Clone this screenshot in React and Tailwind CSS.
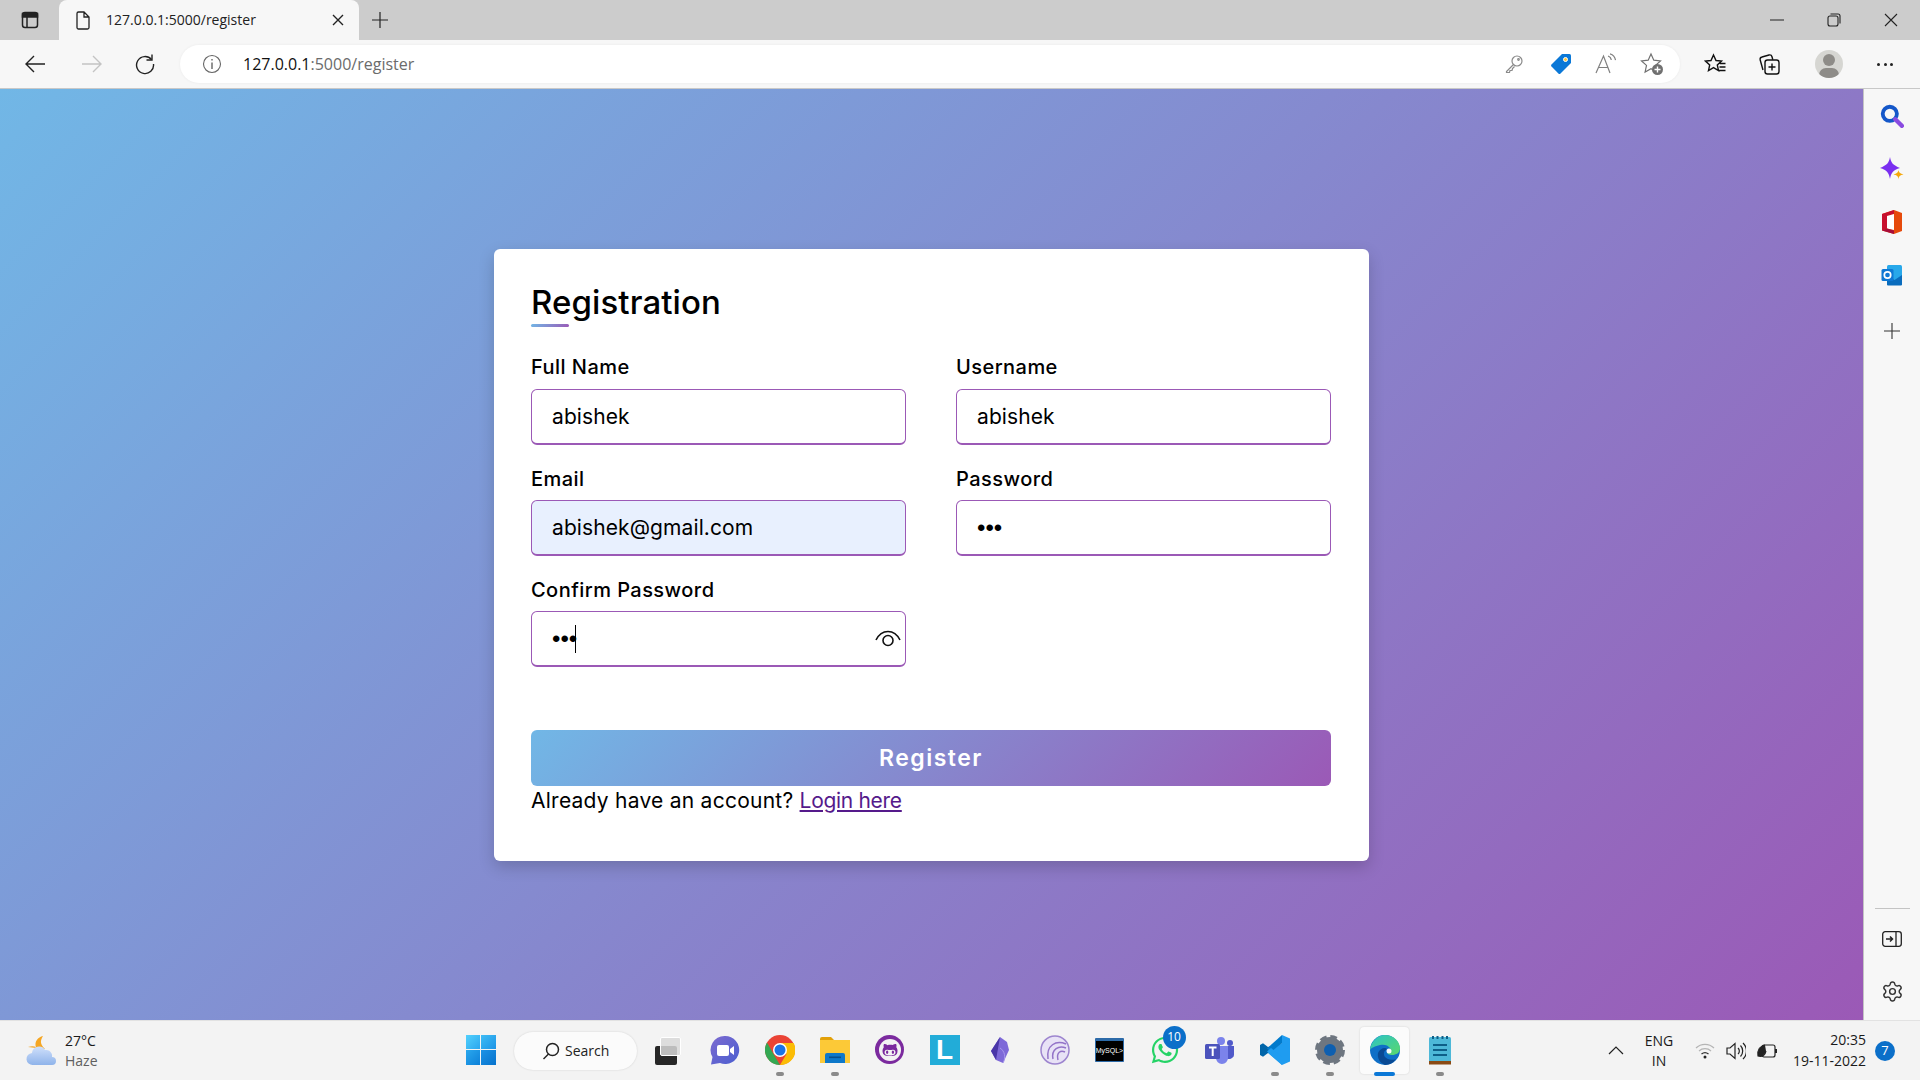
import { FaWhatsapp, FaGithubAlt } from 'react-icons/fa';
import { Settings } from 'lucide-react';

const uiFont = "[font-family:'Open_Sans',sans-serif]";

function Field({ label, value, type = 'text', autofill, firstRow, children }) {
  const isPassword = type === 'password';
  return (
    <div className="relative w-[375px]">
      <label className={`block h-[30px] text-[20px] leading-[30px] font-medium tracking-[0.45px] text-black ${firstRow ? 'mb-[7px]' : 'mb-[5px] -mt-px pb-px h-[31px]'}`}>
        {label}
      </label>
      <div className="relative">
        <input
          readOnly
          type={type}
          value={value}
          className={`block w-full h-[56px] pl-[20px] pr-[10px] rounded-[6px] border border-b-2 border-[#9b59b6] text-black outline-none ${isPassword ? "text-[24px] [font-family:'Liberation_Sans',sans-serif]" : 'text-[21px] tracking-[0.1px]'} ${autofill ? 'bg-[#e8f0fe]' : 'bg-white'}`}
        />
        {children}
      </div>
    </div>
  );
}

function EyeIcon() {
  return (
    <svg className="absolute right-[5px] top-[18px]" width="26" height="20" viewBox="0 0 26 20" fill="none" stroke="#111" strokeWidth="1.6">
      <path d="M1 11C4 5 8 2.5 13 2.5S22 5 25 11" />
      <circle cx="13" cy="11.5" r="5" />
    </svg>
  );
}

function TabBar() {
  return (
    <div className="h-10 bg-[#cccccc] flex items-end shrink-0">
      <div className="w-[59px] h-10 flex items-center justify-center">
        <svg width="20" height="20" viewBox="0 0 20 20" fill="none" stroke="#222" strokeWidth="1.5">
          <rect x="2.5" y="2.5" width="15" height="15" rx="2.5" />
          <path d="M2.5 3.5h15V7h-15z" fill="#222" />
          <path d="M7 7v10" />
        </svg>
      </div>
      <div className="w-[300px] h-10 bg-[#f7f7f7] rounded-t-[8px] flex items-center pl-[15px] pr-[15px]">
        <svg width="18" height="20" viewBox="0 0 18 20" fill="none" stroke="#222" strokeWidth="1.3" className="shrink-0">
          <path d="M3 3.5A1.5 1.5 0 0 1 4.5 2H10l5 5v10.5a1.5 1.5 0 0 1-1.5 1.5h-9A1.5 1.5 0 0 1 3 17.5zM10 2v5h5" />
        </svg>
        <span className={`ml-[14px] -mt-[1px] text-[14px] text-[#222] ${uiFont}`}>127.0.0.1:5000/register</span>
        <svg className="ml-auto" width="12" height="12" viewBox="0 0 12 12" stroke="#222" strokeWidth="1.4">
          <path d="M1 1l10 10M11 1L1 11" />
        </svg>
      </div>
      <div className="w-[42px] h-10 flex items-center justify-center">
        <svg width="18" height="18" viewBox="0 0 18 18" stroke="#222" strokeWidth="1.2">
          <path d="M9 1v16M1 9h16" />
        </svg>
      </div>
      <div className="flex-1" />
      <div className="w-[56px] h-10 flex items-center justify-center mr-[1px]">
        <svg width="14" height="2" viewBox="0 0 14 2" stroke="#222"><path d="M0 1h14" /></svg>
      </div>
      <div className="w-[56px] h-10 flex items-center justify-center">
        <svg width="14" height="14" viewBox="0 0 14 14" fill="none" stroke="#222" strokeWidth="1.1">
          <rect x="1" y="3" width="10" height="10" rx="2" />
          <path d="M3.5 1H11a2 2 0 0 1 2 2v7.5" />
        </svg>
      </div>
      <div className="w-[58px] h-10 flex items-center justify-center">
        <svg width="14" height="14" viewBox="0 0 14 14" stroke="#222" strokeWidth="1.1"><path d="M1 1l12 12M13 1L1 13" /></svg>
      </div>
    </div>
  );
}

function ToolBtn({ w, children }) {
  return <div className={`${w} h-12 flex items-center justify-center shrink-0`}>{children}</div>;
}

function ToolBar() {
  return (
    <div className="h-[49px] bg-[#f7f7f7] border-b border-[#c8c8c8] flex items-center shrink-0">
      <ToolBtn w="w-[70px]">
        <svg width="22" height="20" viewBox="0 0 22 20" fill="none" stroke="#222" strokeWidth="1.4">
          <path d="M21 10H2M10 2l-8 8 8 8" />
        </svg>
      </ToolBtn>
      <ToolBtn w="w-[44px]">
        <svg width="22" height="20" viewBox="0 0 22 20" fill="none" stroke="#c4c4c4" strokeWidth="1.4">
          <path d="M1 10h19M12 2l8 8-8 8" />
        </svg>
      </ToolBtn>
      <ToolBtn w="w-[62px]">
        <svg width="22" height="22" viewBox="0 0 22 22" fill="none" stroke="#222" strokeWidth="1.4">
          <path d="M17.5 6.5A8.5 8.5 0 1 0 19.5 11" />
          <path d="M18 1.5v5.5h-5.5" />
        </svg>
      </ToolBtn>
      <div className="w-[1500px] ml-[4px] h-[38px] bg-white rounded-[19px] flex items-center pl-[22px] shadow-[0_0_3px_rgba(0,0,0,0.06)] shrink-0">
        <svg width="20" height="20" viewBox="0 0 20 20" fill="none" stroke="#666" strokeWidth="1.1" className="shrink-0">
          <circle cx="10" cy="10" r="8.5" />
          <path d="M10 8.5V15M10 5v1.6" strokeWidth="1.4" />
        </svg>
        <span className={`ml-[21px] text-[16px] text-[#6b6b6b] ${uiFont}`}>
          <span className="text-[#111]">127.0.0.1</span>:5000/register
        </span>
        <div className="ml-auto flex items-center h-full pr-[16px]">
          <svg className="mr-[2px]" width="20" height="20" viewBox="0 0 20 20" fill="none" stroke="#8a8a8a" strokeWidth="1.2">
            <circle cx="13" cy="7" r="5" />
            <path d="M9.5 10.5L2.5 17.5v1h3l.5-2h2l.5-2 2-2" />
            <circle cx="14.5" cy="5.5" r="0.8" />
          </svg>
          <svg className="ml-[24px]" width="22" height="22" viewBox="0 0 22 22">
            <path d="M12 1h7.5A1.5 1.5 0 0 1 21 2.5V10L10.5 20.5a1.5 1.5 0 0 1-2.1 0L1.500 13.600a1.500 1.500 0 0 1 0-2.100z" fill="#0b78d7" />
            <circle cx="15.5" cy="6.5" r="2" fill="#ffc83d" stroke="#fff" />
          </svg>
          <svg className="ml-[23px]" width="24" height="22" viewBox="0 0 24 22" fill="none" stroke="#808080" strokeWidth="1.2">
            <path d="M1 20L8.5 3 15 20M3.5 14.5h10" />
            <path d="M13 3c2 .6 3 2 3.3 4M15 .8c3 .8 5 3 5.5 6.4" />
          </svg>
          <svg className="ml-[21px]" width="24" height="24" viewBox="0 0 24 24" fill="none" stroke="#707070" strokeWidth="1.2">
            <path d="M11 2l2.8 6.2 6.7.7-5 4.500 1.400 6.600L11 16.800 5.100 20l1.400-6.600-5-4.500 6.700-.7z" />
            <circle cx="17.5" cy="17.5" r="5.5" fill="#707070" stroke="none" />
            <path d="M17.5 14.5v6M14.5 17.5h6" stroke="#fff" strokeWidth="1.4" />
          </svg>
        </div>
      </div>
      <div className="ml-[24px] w-[22px] flex justify-center shrink-0 -mr-px">
        <svg width="22" height="22" viewBox="0 0 22 22" fill="none" stroke="#111" strokeWidth="1.4">
          <path d="M9.5 2l2.500 5.500 5.500.6-4.200 3.800 1.200 5.600-5-2.900-5 2.900 1.200-5.600L1.500 8.100 7 7.500zM16 10.500h5.500M15.500 14h6M15 17.500h6.500" />
        </svg>
      </div>
      <div className="ml-[32px] w-[24px] flex justify-center shrink-0">
        <svg width="24" height="24" viewBox="0 0 24 24" fill="none" stroke="#111" strokeWidth="1.4">
          <rect x="8" y="8" width="14" height="14" rx="2.5" />
          <path d="M6 18l-2.800-10A2.500 2.500 0 0 1 5 5l7-2a2.500 2.500 0 0 1 3 1.800l.8 3M15 11.500v7M11.500 15h7" />
        </svg>
      </div>
      <div className="ml-[34px] w-[28px] h-[28px] rounded-full bg-[#d6d6d2] overflow-hidden relative shrink-0">
        <div className="absolute left-[8px] top-[4px] w-[12px] h-[12px] rounded-full bg-[#8e8c88]" />
        <div className="absolute left-[4px] top-[18px] w-[20px] h-[14px] rounded-full bg-[#8e8c88]" />
      </div>
      <div className="ml-[32px] w-[20px] flex justify-between px-[2px] shrink-0">
        <div className="w-[3px] h-[3px] rounded-full bg-[#222]" />
        <div className="w-[3px] h-[3px] rounded-full bg-[#222]" />
        <div className="w-[3px] h-[3px] rounded-full bg-[#222]" />
      </div>
    </div>
  );
}

function RegisterCard() {
  return (
    <div className="w-[875px] bg-white rounded-[6px] pt-[33px] pb-[45px] px-[37px] shadow-[0_6px_16px_rgba(0,0,0,0.18)] [font-family:Inter,sans-serif]">
      <h2 className="text-[33px] leading-[40px] font-medium tracking-[0.1px] text-black">Registration</h2>
      <div className="w-[38px] h-[3px] mt-[2px] rounded-sm bg-[linear-gradient(135deg,#71b7e6,#9b59b6)]" />
      <div className="mt-[25px] grid grid-cols-[375px_375px] gap-x-[50px] gap-y-[20px]">
        <Field firstRow label="Full Name" value="abishek" />
        <Field firstRow label="Username" value="abishek" />
        <Field autofill label="Email" value="abishek@gmail.com" />
        <Field label="Password" type="password" value="abc" />
        <Field label="Confirm Password" type="password" value="abc">
          <div className="absolute left-[44px] top-[14px] w-px h-[28px] bg-black" />
          <EyeIcon />
        </Field>
      </div>
      <button className="mt-[63px] block w-[800px] h-[56px] rounded-[6px] text-white text-[23px] font-semibold tracking-[1.5px] bg-[linear-gradient(135deg,#71b7e6,#9b59b6)]">
        Register
      </button>
      <p className="h-[30px] text-[21px] leading-[30px] tracking-[0.25px] text-black">
        Already have an account? <a href="#login" className="text-[#551a8b] underline tracking-[-0.3px]">Login here</a>
      </p>
    </div>
  );
}

function SideBar() {
  return (
    <div className="w-[57px] bg-[#f7f7f7] border-l border-[#c4c4c4] flex flex-col items-center shrink-0">
      <div className="h-[53px] flex items-center justify-center">
        <svg width="24" height="24" viewBox="0 0 22 22" fill="none">
          <circle cx="9" cy="9" r="6.5" stroke="#1457c9" strokeWidth="3.5" />
          <path d="M14 14l6 6" stroke="#8a4be0" strokeWidth="4" strokeLinecap="round" />
        </svg>
      </div>
      <div className="h-[53px] flex items-center justify-center">
        <svg width="24" height="24" viewBox="0 0 24 24">
          <path d="M10 0c1 6 3 8 10 11-7 2-9 5-10 11C9 16 7 13 0 11 7 8 9 6 10 0z" fill="#7a2ff0" />
          <path d="M18.5 13c.4 2.500 1.500 3.500 5 4.500-3.500.5-4.600 1.500-5 5-.4-3.500-1.500-4.500-5-5 3.500-1 4.600-2 5-4.500z" fill="#f5a70a" />
        </svg>
      </div>
      <div className="h-[53px] flex items-center justify-center">
        <svg width="22" height="26" viewBox="0 0 22 26">
          <path d="M13 1L21 4V22L13 25 1 21.5V5z" fill="#e64a0c" />
          <path d="M13 1L1 5V21.5L6 19.5V7L13 5z" fill="#c8102e" />
          <path d="M6 7v12.5L13 21V5z" fill="#fff" />
          <path d="M1 21.5L13 25 13 21.5 6 19.5z" fill="#a80c3a" />
        </svg>
      </div>
      <div className="h-[53px] flex items-center justify-center">
        <svg width="22" height="22" viewBox="0 0 22 22">
          <rect x="6" y="1" width="15" height="20" rx="1.5" fill="#28a8ea" />
          <path d="M6 11l7.500 5L21 11v9.500a1 1 0 0 1-1 1H7a1 1 0 0 1-1-1z" fill="#0a6cbd" />
          <rect x="0.5" y="5" width="12" height="12" rx="1.5" fill="#0f78d4" />
          <circle cx="6.5" cy="11" r="3.2" fill="none" stroke="#fff" strokeWidth="1.7" />
        </svg>
      </div>
      <div className="h-[59px] flex items-center justify-center">
        <svg width="16" height="16" viewBox="0 0 16 16" stroke="#333" strokeWidth="1.1"><path d="M8 0v16M0 8h16" /></svg>
      </div>
      <div className="flex-1" />
      <div className="w-[35px] h-px bg-[#c4c4c4]" />
      <div className="mt-[8px] h-[44px] flex items-center justify-center">
        <svg width="20" height="16" viewBox="0 0 20 16" fill="none" stroke="#222" strokeWidth="1.3">
          <rect x="0.7" y="0.7" width="18.6" height="14.6" rx="2.5" />
          <path d="M14 1v14" />
          <path d="M4 8h6M8 5.500L10.500 8 8 10.500" strokeWidth="1.5" />
        </svg>
      </div>
      <div className="mt-[8px] mb-[7px] h-[44px] flex items-center justify-center">
        <Settings size={23} strokeWidth={1.5} color="#333" />
      </div>
    </div>
  );
}

function Slot({ running, active, children }) {
  return (
    <div className="relative w-[55px] h-[60px] flex items-center justify-center pb-[2px] shrink-0">
      {active && <div className="absolute left-[3px] top-[6px] w-[49px] h-[47px] rounded-[4px] bg-[#fbfbfb] shadow-[0_0_2px_rgba(0,0,0,0.15)]" />}
      <div className="relative flex items-center justify-center">{children}</div>
      {running && <div className="absolute left-[24px] bottom-[5px] w-[8px] h-[4px] rounded-full bg-[#8a8a8a]" />}
      {active && <div className="absolute left-[17px] bottom-[5px] w-[21px] h-[4px] rounded-full bg-[#0b78d7]" />}
    </div>
  );
}

function Taskbar() {
  return (
    <div className="h-[60px] bg-[#f3f3f3] border-t border-[#e2e2e2] flex items-center shrink-0 relative">
      <div className="w-[453px] flex items-center pl-[25px] shrink-0">
        <svg width="32" height="32" viewBox="0 0 32 32">
          <defs>
            <linearGradient id="cloud" x1="0" y1="0" x2="0" y2="1">
              <stop offset="0" stopColor="#cfe0fb" />
              <stop offset="1" stopColor="#8fb3ea" />
            </linearGradient>
          </defs>
          <path d="M18 1C15 6 15 9 20 14L3 12c3-1 6-1 8 0-2-5 2-10 7-11z" fill="#f5a623" />
          <path d="M8 30a6 6 0 0 1-1-12 7 7 0 0 1 13-3 6 6 0 0 1 7 7 4 4 0 0 1 0 8z" fill="url(#cloud)" />
        </svg>
        <div className={`ml-[8px] text-[14px] leading-[20px] ${uiFont}`}>
          <div className="text-[#1a1a1a]">27°C</div>
          <div className="text-[#5f5f5f]">Haze</div>
        </div>
      </div>

      <div className="w-[55px] flex justify-center pb-[2px] shrink-0">
        <div className="grid grid-cols-2 gap-[1px] w-[30px] h-[30px]">
          <div className="bg-[linear-gradient(135deg,#52d0fc,#2aa6ee)]" />
          <div className="bg-[linear-gradient(135deg,#3ebcf5,#1c94e6)]" />
          <div className="bg-[linear-gradient(135deg,#2aa8ee,#0d80d8)]" />
          <div className="bg-[linear-gradient(135deg,#1d93e6,#0672cc)]" />
        </div>
      </div>
      <div className="ml-[6px] mr-[3px] w-[123px] h-[38px] rounded-full bg-[#fbfbfb] shadow-[0_0_2px_rgba(0,0,0,0.15)] flex items-center pl-[28px] shrink-0">
        <svg width="18" height="18" viewBox="0 0 18 18" fill="none" stroke="#222" strokeWidth="1.5">
          <circle cx="10.5" cy="7.5" r="6" />
          <path d="M6.5 12L1.500 17" />
        </svg>
        <span className={`ml-[5px] text-[14px] text-[#222] ${uiFont}`}>Search</span>
      </div>

      <Slot>
        <div className="relative w-[30px] h-[30px]">
          <div className="absolute left-[2px] top-[11px] w-[22px] h-[19px] rounded-[2px] bg-[#262626]" />
          <div className="absolute left-[7px] top-[2px] w-[21px] h-[19px] rounded-[2px] bg-[#d8d8d8]/85 border border-white" />
        </div>
      </Slot>
      <div className="w-[2px] shrink-0" />
      <Slot>
        <svg width="30" height="30" viewBox="0 0 30 30">
          <defs>
            <linearGradient id="meet" x1="0" y1="0" x2="1" y2="1">
              <stop offset="0" stopColor="#7d6bd0" />
              <stop offset="1" stopColor="#4a5ed0" />
            </linearGradient>
          </defs>
          <path d="M15 1a14 14 0 1 1-5 27L1 29.5 2.5 22A14 14 0 0 1 15 1z" fill="url(#meet)" />
          <rect x="7" y="10" width="12" height="11" rx="2" fill="#fff" />
          <path d="M20 14l4-3v9l-4-3z" fill="#fff" />
        </svg>
      </Slot>
      <Slot running>
        <svg width="30" height="30" viewBox="0 0 30 30">
          <circle cx="15" cy="15" r="15" fill="#ea4335" />
          <path d="M15 8h13.7A15 15 0 0 1 15 30l6.5-11z" fill="#fbbc05" />
          <path d="M2 7.500L8.500 19 15 30 A15 15 0 0 1 2 7.500z" fill="#34a853" />
          <circle cx="15" cy="15" r="7" fill="#fff" />
          <circle cx="15" cy="15" r="5.5" fill="#1a73e8" />
        </svg>
      </Slot>
      <Slot running>
        <svg width="30" height="28" viewBox="0 0 30 28">
          <path d="M0 3a2 2 0 0 1 2-2h9l3 3h-14z" fill="#e2a008" />
          <rect x="0" y="4" width="30" height="23" fill="#fcc937" />
          <path d="M5 19a2 2 0 0 1 2-2h16a2 2 0 0 1 2 2v8H5z" fill="#0e78c9" />
          <rect x="9" y="20.5" width="12" height="1.6" fill="#074f8c" />
        </svg>
      </Slot>
      <Slot>
        <div className="relative w-[29px] h-[29px] rounded-full bg-[#7b2a9e] flex items-center justify-center">
          <div className="w-[22px] h-[22px] rounded-full bg-[#f3f3f3] flex items-center justify-center">
            <FaGithubAlt className="text-[#7b2a9e] text-[16px]" />
          </div>
        </div>
      </Slot>
      <Slot>
        <div className="w-[30px] h-[30px] bg-[#22acd8] flex items-center justify-center">
          <span className="text-white text-[28px] leading-none font-bold [font-family:'Liberation_Sans',sans-serif]">L</span>
        </div>
      </Slot>
      <Slot>
        <svg width="20" height="28" viewBox="0 0 20 28">
          <path d="M10 1l7 5 2 8-6 13-7-3-5-9z" fill="#7e69d8" />
          <path d="M10 1L6 24l-5-9z" fill="#4a36a8" />
          <path d="M13 27c3-5 2-12-3-15" stroke="#a898ee" fill="none" />
        </svg>
      </Slot>
      <Slot>
        <svg width="30" height="30" viewBox="0 0 30 30" fill="none">
          <circle cx="15" cy="15" r="14" fill="#e8e2f6" stroke="#9d85cf" strokeWidth="1.5" />
          <path d="M26 9C16 5 6 10 8 24M26 13c-7-3-15 1-13 11M25 17c-4-2-9 0-7 8" stroke="#9373c8" strokeWidth="1.5" />
        </svg>
      </Slot>
      <Slot>
        <div className="w-[29px] h-[24px] bg-black border-t-[3px] border border-[#2c6aa8] rounded-[1px] flex items-center justify-center overflow-hidden">
          <span className="text-white text-[7px] leading-none [font-family:'Liberation_Sans',sans-serif]">MySQL&gt;</span>
        </div>
      </Slot>
      <Slot>
        <div className="relative">
          <FaWhatsapp className="text-[#25d366] text-[30px]" />
          <div className={`absolute -top-[9px] left-[13px] w-[23px] h-[23px] rounded-full bg-[#0b6fc9] flex items-center justify-center text-white text-[12px] ${uiFont}`}>10</div>
        </div>
      </Slot>
      <Slot>
        <svg width="30" height="28" viewBox="0 0 30 28">
          <circle cx="16" cy="5" r="4" fill="#7b83eb" />
          <circle cx="25" cy="7" r="3" fill="#5059c9" />
          <path d="M19 10h10v9a5 5 0 0 1-8 3z" fill="#5059c9" />
          <path d="M8 10h15v12a6 6 0 0 1-12 0z" fill="#7b83eb" />
          <rect x="0" y="8" width="15" height="15" rx="1.5" fill="#4b53bc" />
          <path d="M4 11.5h7.5M7.700 11.5v8.5" stroke="#fff" strokeWidth="2" />
        </svg>
      </Slot>
      <Slot running>
        <svg width="30" height="30" viewBox="0 0 30 30">
          <path d="M22 0l8 3.500v23L22 30 8 18l14-10z" fill="#1f9cf0" />
          <path d="M22 8L8 18l-5 3.800L0 20v-10l3-1.800 5 3.800z" fill="#0065a9" />
          <path d="M22 0L7 13.500l4 3.500L22 8z" fill="#007acc" />
          <path d="M22 30L7 16.500l4-3.500L22 22z" fill="#1f9cf0" />
        </svg>
      </Slot>
      <Slot running>
        <svg width="30" height="30" viewBox="0 0 30 30" fill="none">
          <circle cx="15" cy="15" r="9" stroke="#6e7680" strokeWidth="8" />
          <circle cx="15" cy="15" r="13" stroke="#6e7680" strokeWidth="4" strokeDasharray="6.5 3.7" />
          <circle cx="15" cy="15" r="6" fill="#0e5fb0" />
        </svg>
      </Slot>
      <Slot active>
        <svg width="30" height="30" viewBox="0 0 30 30">
          <defs>
            <linearGradient id="edge" x1="0" y1="0" x2="1" y2="1">
              <stop offset="0" stopColor="#2bc3c9" />
              <stop offset="1" stopColor="#5ad86b" />
            </linearGradient>
          </defs>
          <circle cx="15" cy="15" r="15" fill="#0f6fc7" />
          <path d="M0 15C1 6 8 0 15 0c9 0 15 7 15 13 0 5-4 7-8 7-3 0-5-1-5-3 3 0 4-2 3-4-2-3-6-4-10-3-5 1-9 3-10 5z" fill="url(#edge)" />
          <path d="M15 30c-5-2-8-7-7-12 1-3 4-5 7-5 2 0 2 1 1 2-2 1-3 4-1 7 2 2 6 4 11 2-2 3-6 6-11 6z" fill="#0a4a94" />
          <circle cx="19" cy="16" r="2.5" fill="#fbfbfb" />
        </svg>
      </Slot>
      <Slot running>
        <svg width="24" height="30" viewBox="0 0 24 30">
          <rect x="1" y="2" width="22" height="25" rx="1.5" fill="#4db8d8" />
          <rect x="1" y="26" width="22" height="3.5" fill="#8a4a14" />
          <path d="M5 1v3M9.500 1v3M14.500 1v3M19 1v3" stroke="#0e5f88" strokeWidth="2" />
          <path d="M5 10h14M5 15h14M5 20h14" stroke="#0e5f88" strokeWidth="2" />
        </svg>
      </Slot>

      <div className="flex-1" />
      <svg className="shrink-0 mr-[19px]" width="16" height="9" viewBox="0 0 16 9" fill="none" stroke="#222" strokeWidth="1.2">
        <path d="M1 8l7-7 7 7" />
      </svg>
      <div className={`w-[32px] text-center text-[14px] leading-[20px] text-[#1a1a1a] shrink-0 ${uiFont}`}>
        ENG<br />IN
      </div>
      <svg className="ml-[20px] shrink-0" width="20" height="18" viewBox="0 0 20 18" fill="none" strokeWidth="1.3">
        <path d="M1 6a13 13 0 0 1 18 0M4 9a9 9 0 0 1 12 0" stroke="#b5b5b5" />
        <path d="M6.500 12a5.500 5.500 0 0 1 7 0" stroke="#333" />
        <circle cx="10" cy="15" r="1.5" fill="#222" />
      </svg>
      <svg className="ml-[11px] shrink-0" width="20" height="20" viewBox="0 0 20 20" fill="none" stroke="#222" strokeWidth="1.2">
        <path d="M1 7h3l5-4.500v15L4 13H1zM12 7a4 4 0 0 1 0 6M14.500 4.500a8 8 0 0 1 0 11M17 2a11 11 0 0 1 0 16" />
      </svg>
      <svg className="ml-[10px] shrink-0" width="22" height="18" viewBox="0 0 22 18" fill="none" stroke="#222" strokeWidth="1.2">
        <rect x="6" y="3" width="13" height="12" rx="2" />
        <path d="M20 7v4" strokeWidth="2" />
        <path d="M9 3C4 4 1 8 2 14c4 1 7-1 8-5" fill="#222" />
      </svg>
      <div className={`ml-[1px] w-[87px] text-right text-[14px] leading-[20px] text-[#1a1a1a] shrink-0 ${uiFont}`}>
        <div>20:35</div>
        <div className="mt-[1px]">19-11-2022</div>
      </div>
      <div className={`ml-[9px] mr-[25px] w-[20px] h-[20px] rounded-full bg-[#0b6fc9] text-white text-[13px] flex items-center justify-center shrink-0 ${uiFont}`}>7</div>
    </div>
  );
}

export default function App() {
  return (
    <div className="w-screen h-screen flex flex-col overflow-hidden">
      <TabBar />
      <ToolBar />
      <div className="flex-1 flex min-h-0">
        <main className="flex-1 flex items-center justify-center pt-[1px] bg-[linear-gradient(135deg,#71b7e6,#9b59b6)]">
          <RegisterCard />
        </main>
        <SideBar />
      </div>
      <Taskbar />
    </div>
  );
}
